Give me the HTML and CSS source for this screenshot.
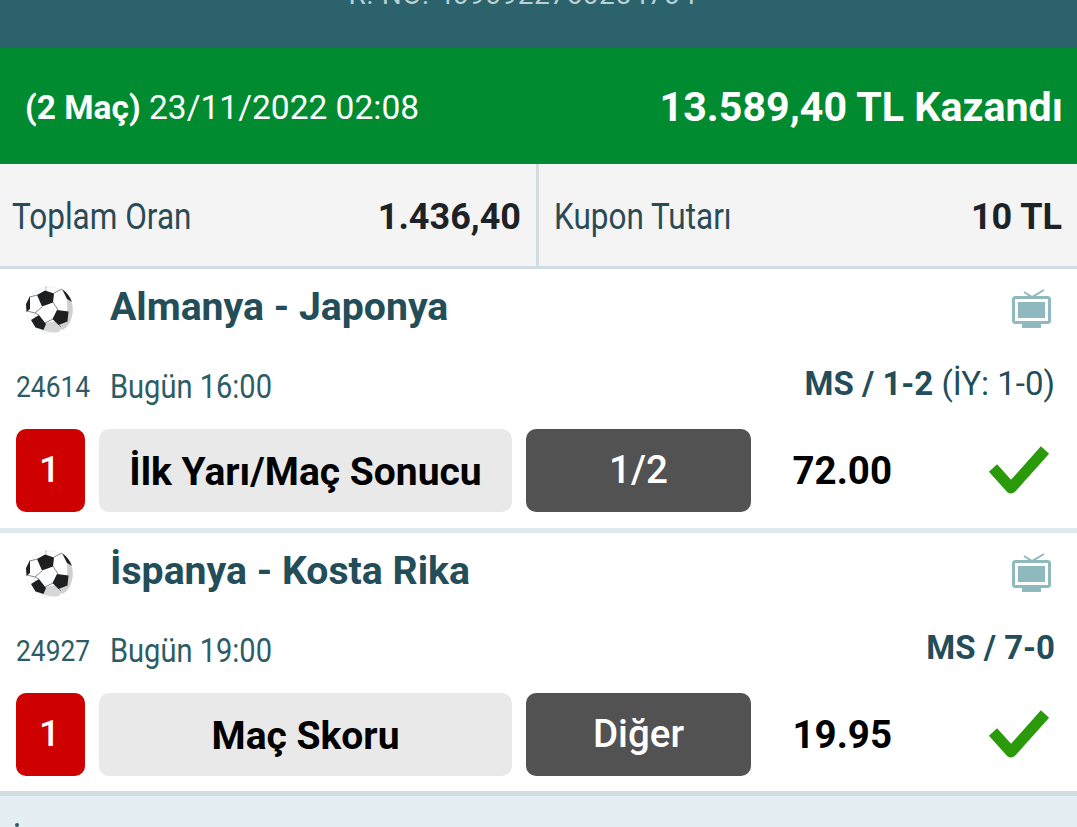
FILE: index.html
```html
<!DOCTYPE html>
<html lang="en">

<head>
    <meta charset="UTF-8" />
    <title>Kupon Detay</title>
    <link rel="stylesheet" href="styles.css">
</head>

<body>

    <svg class="icon-defs" width="0" height="0">
        <symbol id="ball" viewBox="0 0 48 48">
            <circle cx="24.500" cy="24" r="23" fill="#fff" stroke="#e4e4e4" stroke-width=".5" />
            <path d="M42 13l4.500 3q3 9-1 19-3 7-9 9l-2-6 8-4z" fill="#cfcfcf" />
            <path d="M17 44l3-7 11-2 6 6-3 5q-9 1.500-17-2z" fill="#d6d6d6" />
            <path d="M12 9l8-4.500 9 3-1 9-11 4z" fill="#1d1f21" />
            <path d="M32 24l11.500 1.500-1 10-9 3.500-6-6z" fill="#1d1f21" />
            <path d="M6 34l8-5 7 9-2.500 6-8-2.500z" fill="#1d1f21" />
            <path d="M5 10l-4 8 .5 8 3.500-3z" fill="#1d1f21" />
            <path d="M37 3q7 5 10 13l-5-3z" fill="#1d1f21" />
            <path d="M17 21l-7 6 4 2M28 16l5 8M28 33l-8 4M12 9l-7 2M29 7l8-4M10 27l-8-2M34 39l2 2" fill="none" stroke="#555" stroke-width=".7" />
            <path d="M21 0v5" stroke="#999" stroke-width=".6" />
        </symbol>
        <symbol id="tv" viewBox="0 0 40 40">
            <path d="M12 4l8 5 12-7" fill="none" stroke="#8fb8bf" stroke-width="2" />
            <rect x="1.500" y="9.500" width="36" height="25" rx="2" fill="none" stroke="#8fb8bf" stroke-width="3" />
            <rect x="6" y="14" width="27" height="16" fill="#8fb8bf" />
            <rect x="10" y="36" width="19" height="4" fill="#8fb8bf" />
        </symbol>
        <symbol id="check" viewBox="0 0 62 48">
            <path d="M5 22l18 20L57 4" fill="none" stroke="#2b9a0a" stroke-width="11" stroke-linejoin="round" />
        </symbol>
    </svg>

    <div class="top-band">
        <div class="ref-no">R. NO: 4090922760254704</div>
    </div>

    <div class="status">
        <div class="status-date"><b>(2 Maç)</b> 23/11/2022 02:08</div>
        <div class="status-win">13.589,40 TL Kazandı</div>
    </div>

    <div class="stats">
        <div class="stat">
            <span class="stat-label">Toplam Oran</span>
            <span class="stat-value">1.436,40</span>
        </div>
        <div class="stat">
            <span class="stat-label">Kupon Tutarı</span>
            <span class="stat-value">10 TL</span>
        </div>
    </div>

    <div class="match">
        <div class="match-head">
            <svg class="ball"><use href="#ball" /></svg>
            <div class="match-name">Almanya - Japonya</div>
            <svg class="tv"><use href="#tv" /></svg>
        </div>
        <div class="match-info">
            <span class="match-code">24614</span>
            <span class="match-time">Bugün 16:00</span>
            <span class="match-score"><b>MS / 1-2</b> (İY: 1-0)</span>
        </div>
        <div class="pick">
            <div class="pick-no">1</div>
            <div class="pick-market">İlk Yarı/Maç Sonucu</div>
            <div class="pick-choice">1/2</div>
            <div class="pick-odd">72.00</div>
            <svg class="check"><use href="#check" /></svg>
        </div>
    </div>

    <div class="match">
        <div class="match-head">
            <svg class="ball"><use href="#ball" /></svg>
            <div class="match-name">İspanya - Kosta Rika</div>
            <svg class="tv"><use href="#tv" /></svg>
        </div>
        <div class="match-info">
            <span class="match-code">24927</span>
            <span class="match-time">Bugün 19:00</span>
            <span class="match-score"><b>MS / 7-0</b></span>
        </div>
        <div class="pick">
            <div class="pick-no">1</div>
            <div class="pick-market">Maç Skoru</div>
            <div class="pick-choice">Diğer</div>
            <div class="pick-odd">19.95</div>
            <svg class="check"><use href="#check" /></svg>
        </div>
    </div>

    <div class="footer-note"><span class="footer-dot"></span></div>

</body>

</html>
```

FILE: styles.css
```css
html,
body {
    height: 827px;
    overflow: hidden;
}

body {
    background: #e4eff3;
    font-family: Roboto, "Liberation Sans", sans-serif;
    margin: 0;
    padding: 0;
}

.icon-defs {
    display: block;
    height: 0;
}

.top-band {
    height: 48px;
    background: #2b626b;
    overflow: hidden;
    text-align: center;
    padding-right: 32px;
}

.ref-no {
    margin-top: -21px;
    font-size: 28px;
    line-height: 32px;
    letter-spacing: .5px;
    color: #b9d0d4;
}

.status {
    height: 114px;
    padding: 2px 14px 0 25px;
    background: #008b30;
    color: #fff;
    display: flex;
    justify-content: space-between;
    align-items: center;
}

.status-date {
    font-size: 33.5px;
}

.status-date b {
    font-weight: 700;
}

.status-win {
    font-size: 41.2px;
    font-weight: 700;
}

.stats {
    display: grid;
    grid-template-columns: 539px 1fr;
    height: 102px;
    background: #f4f4f4;
    border-bottom: 3px solid #d0dde3;
}

.stat {
    display: flex;
    justify-content: space-between;
    align-items: center;
    padding: 4px 15px 0 15px;
}

.stat:first-child {
    border-right: 3px solid #d0dde3;
    padding: 4px 15px 0 12px;
}

.stat-label {
    font-size: 36px;
    color: #2a4a55;
    transform: scaleX(.875);
    transform-origin: left center;
}

.stat-value {
    font-size: 36px;
    font-weight: 700;
    color: #1d2227;
}

.match {
    height: 259px;
    background: #fff;
    border-bottom: 5px solid #dfe9ed;
    padding: 0 22px 0 16px;
    display: flex;
    flex-direction: column;
}

.match + .match {
    height: 258px;
    border-bottom: 5px solid #d0dde3;
}

.match-head {
    height: 74px;
    display: flex;
    align-items: center;
}

.ball {
    width: 48px;
    height: 48px;
    margin: 8px 37px 0 9px;
    flex: none;
}

.match-name {
    flex: 1;
    font-size: 39.2px;
    font-weight: 700;
    color: #234d58;
    padding-top: 2px;
}

.tv {
    width: 40px;
    height: 40px;
    margin: 4px 3px 0 0;
    flex: none;
}

.match-info {
    height: 86px;
    display: flex;
    align-items: center;
    color: #2d5c66;
}

.match-code {
    width: 94px;
    font-size: 30px;
    transform: scaleX(.88);
    transform-origin: left center;
}

.match-time {
    flex: 1;
    font-size: 33px;
    transform: scaleX(.88);
    transform-origin: left center;
}

.match-score {
    font-size: 33px;
    color: #234d58;
    margin-top: -6px;
}

.pick {
    display: flex;
    align-items: stretch;
    height: 83px;
}

.pick-no,
.pick-market,
.pick-choice {
    border-radius: 10px;
    display: flex;
    align-items: center;
    justify-content: center;
    box-sizing: border-box;
}

.pick-no {
    width: 69px;
    background: #cf0000;
    color: #fff;
    font-size: 37px;
    font-weight: 500;
    margin-right: 14px;
    padding: 0 2px 2px 0;
}

.pick-market {
    width: 413px;
    background: #e9e9e9;
    color: #000;
    font-size: 39px;
    font-weight: 700;
    margin-right: 14px;
    padding-top: 3px;
}

.pick-choice {
    width: 225px;
    background: #525252;
    color: #fff;
    font-size: 38.5px;
    font-weight: 500;
    padding-bottom: 2px;
}

.pick-odd {
    width: 141px;
    color: #000;
    font-size: 38.5px;
    font-weight: 700;
    display: flex;
    align-items: center;
    justify-content: flex-end;
    padding-right: 0;
}

.check {
    width: 62px;
    height: 48px;
    margin: 17px 0 0 96px;
    flex: none;
}

.footer-note {
    height: 31px;
    position: relative;
}

.footer-dot {
    position: absolute;
    left: 15px;
    top: 27px;
    width: 4px;
    height: 4px;
    border-radius: 50%;
    background: #2d5c66;
}
```
